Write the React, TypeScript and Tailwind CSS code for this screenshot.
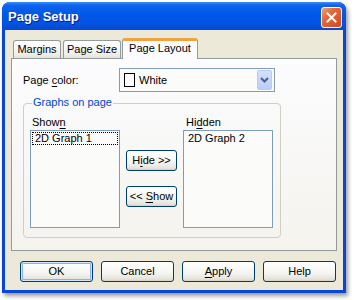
import React from "react";

const xpBtn =
  "flex items-center justify-center rounded-[3px] border border-[#003C74] bg-[linear-gradient(to_bottom,#FFFFFF_0%,#F4F4F0_60%,#E6E3DA_90%,#D6D0C5_100%)] text-[11px] text-black";

function U({ children }: { children: React.ReactNode }) {
  return <span className="underline underline-offset-[2px]">{children}</span>;
}

function Tab({ label, active, w }: { label: string; active?: boolean; w: string }) {
  if (active) {
    return (
      <div
        className={`${w} relative z-10 -mb-px flex h-[21px] items-start justify-center rounded-t-[3px] border-x border-t-[3px] border-x-[#919B9C] border-t-[#F1A13E] bg-[#FCFCFE] pt-[1px]`}
      >
        {label}
      </div>
    );
  }
  return (
    <div
      className={`${w} flex h-[18px] items-center justify-center rounded-t-[3px] border-x border-t border-[#919B9C] bg-[linear-gradient(to_bottom,#FFFFFF,#F2F1EC_70%,#E4E2DA)]`}
    >
      {label}
    </div>
  );
}

export default function App() {
  return (
    <div className="h-[300px] w-[354px] bg-white pl-[2px] pt-[2px] font-['Liberation_Sans',Arial,sans-serif] text-[11px] leading-[13px] text-black">
      <div className="flex h-[291px] w-[344px] flex-col rounded-t-[8px] bg-[#0846DA] shadow-[2px_3px_4px_rgba(0,0,0,0.4)]">
        {/* Title bar */}
        <div className="flex h-[28px] items-center justify-between rounded-t-[8px] bg-[linear-gradient(to_bottom,#3D8EF8_0%,#0A62EE_12%,#0058E6_45%,#0054E3_75%,#0A47D0_100%)] pl-[6px] pr-[4px]">
          <span className="text-[13px] font-bold text-white [text-shadow:1px_1px_0_#0A1A8A]">
            Page Setup
          </span>
          <div className="mt-[2px] flex h-[21px] w-[21px] items-center justify-center rounded-[3px] border border-white bg-[linear-gradient(135deg,#F0A07A_0%,#E2693C_35%,#CF4A1E_100%)]">
            <svg width="11" height="11" viewBox="0 0 11 11">
              <path d="M1.5 1.5 L9.5 9.5 M9.5 1.5 L1.5 9.5" stroke="white" strokeWidth="2" strokeLinecap="square" />
            </svg>
          </div>
        </div>

        {/* Body */}
        <div className="mx-[3px] mb-[3px] flex flex-1 flex-col bg-[#ECE9D8] pl-[6px] pt-[8px]">
          {/* Tabs */}
          <div className="flex items-end pl-[2px]">
            <Tab label="Margins" w="w-[48px]" />
            <div className="w-[2px]" />
            <Tab label="Page Size" w="w-[58px]" />
            <div className="w-[1px]" />
            <Tab label="Page Layout" w="w-[76px]" active />
          </div>

          {/* Panel */}
          <div className="h-[193px] w-[326px] border border-[#919B9C] bg-[linear-gradient(to_bottom,#FCFCFE,#F4F3EE)] pl-[11px] pt-[9px]">
            <div className="flex items-center">
              <div className="w-[96px]">
                Page <U>c</U>olor:
              </div>
              <div className="flex h-[24px] w-[156px] items-center border border-[#7F9DB9] bg-[#FBFBF9] p-[1px]">
                <div className="ml-[3px] h-[14px] w-[11px] border border-black bg-white" />
                <span className="ml-[4px] flex-1">White</span>
                <div className="mr-[1px] flex h-[20px] w-[15px] items-center justify-center rounded-[2px] border border-[#B7CBF5] bg-[linear-gradient(to_bottom,#D3E1FD,#B9CDF8)]">
                  <svg width="9" height="6" viewBox="0 0 9 6">
                    <path d="M1 1 L4.5 4.5 L8 1" stroke="#4D6185" strokeWidth="2" fill="none" />
                  </svg>
                </div>
              </div>
            </div>

            {/* Group box */}
            <div className="relative mt-[11px] h-[135px] w-[258px] rounded-[4px] border border-[#D0D0BF] pl-[6px] pt-[12px]">
              <span className="absolute left-[8px] top-[-8px] bg-[#F9F9F7] px-[1px] text-[#0046D5]">
                Graphs on page
              </span>
              <div className="flex">
                <div className="flex w-[90px] flex-col">
                  <div className="mb-[1px] pl-[2px]">
                    Show<U>n</U>
                  </div>
                  <div className="h-[98px] border border-[#7F9DB9] bg-[#FBFBF9] p-[1px]">
                    <div className="h-[13px] border border-dotted border-black pl-[2px] leading-[11px]">
                      2D Graph 1
                    </div>
                  </div>
                </div>
                <div className="ml-[6px] flex w-[51px] flex-col pt-[34px]">
                  <div className={`${xpBtn} h-[21px]`}>
                    <span>
                      H<U>i</U>de &gt;&gt;
                    </span>
                  </div>
                  <div className={`${xpBtn} mt-[15px] h-[21px]`}>
                    <span>
                      &lt;&lt; <U>S</U>how
                    </span>
                  </div>
                </div>
                <div className="ml-[6px] flex w-[90px] flex-col">
                  <div className="mb-[1px] pl-[3px]">
                    Hi<U>d</U>den
                  </div>
                  <div className="h-[98px] border border-[#7F9DB9] bg-[#FBFBF9] p-[1px]">
                    <div className="h-[13px] pl-[3px] leading-[13px]">2D Graph 2</div>
                  </div>
                </div>
              </div>
            </div>
          </div>

          {/* Buttons */}
          <div className="mt-[10px] flex w-[326px] justify-end gap-[8px] pr-[1px]">
            <div className={`${xpBtn} h-[21px] w-[73px] shadow-[inset_0_0_0_1px_#CEE7FF,inset_0_0_0_2px_#8CB0F0]`}>OK</div>
            <div className={`${xpBtn} h-[21px] w-[73px]`}>Cancel</div>
            <div className={`${xpBtn} h-[21px] w-[73px]`}>
              <span>
                <U>A</U>pply
              </span>
            </div>
            <div className={`${xpBtn} h-[21px] w-[73px]`}>Help</div>
          </div>
        </div>
      </div>
    </div>
  );
}
